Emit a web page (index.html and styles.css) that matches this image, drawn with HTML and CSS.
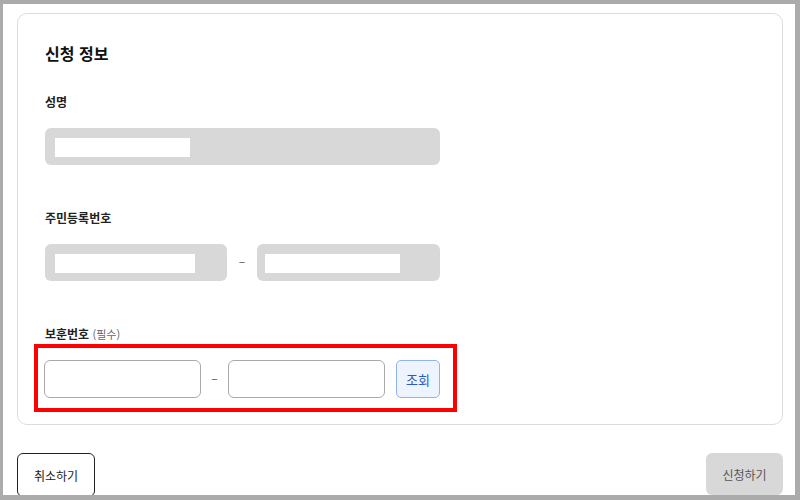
FILE: index.html
```html
<!DOCTYPE html>
<html lang="ko">
<head>
<meta charset="utf-8">
<link rel="stylesheet" href="styles.css">
</head>
<body>
<div class="frame">
  <section class="card">
    <h2 class="title">신청 정보</h2>

    <div class="label label-first">성명</div>
    <div class="field field-name"><span class="mask mask-name"></span></div>

    <div class="label">주민등록번호</div>
    <div class="pair">
      <div class="field"><span class="mask mask-jumin"></span></div>
      <span class="dash">–</span>
      <div class="field field-right"><span class="mask mask-jumin2"></span></div>
    </div>

    <div class="label">보훈번호 <span class="req">(필수)</span></div>
    <div class="bohun">
      <input class="input" type="text">
      <span class="dash">–</span>
      <input class="input" type="text">
      <button class="lookup" type="button">조회</button>
      <div class="highlight"></div>
    </div>
  </section>

  <div class="actions">
    <button class="btn btn-cancel" type="button">취소하기</button>
    <button class="btn btn-submit" type="button">신청하기</button>
  </div>
</div>
</body>
</html>
```

FILE: styles.css
```css
* { box-sizing: border-box; }

html, body {
  margin: 0;
  padding: 0;
  background: #ababab;
  height: 500px;
  overflow: hidden;
}

body {
  font-family: "Noto Sans CJK KR", "Noto Sans", sans-serif;
  color: #111;
}

.frame {
  margin: 4px 5px 0 3px;
  height: 491px;
  background: #fff;
  padding: 9px 12px 0 14px;
  overflow: hidden;
}

.card {
  border: 1px solid #dcdcdc;
  border-radius: 10px;
  padding: 26px 27px 26px 27px;
  height: 412px;
}

.title {
  margin: 1px 0 0 0;
  font-size: 16px;
  line-height: 24px;
  font-weight: 700;
  color: #111;
}

.label {
  font-size: 12px;
  font-weight: 700;
  line-height: 20px;
  margin-top: 43px;
  margin-bottom: 16px;
  color: #222;
}

.label-first {
  margin-top: 27px;
}

.req {
  font-weight: 400;
  font-size: 11px;
  color: #666;
}

.field {
  height: 37px;
  background: #d8d8d8;
  border-radius: 6px;
  padding: 10px 10px;
  display: flex;
  align-items: flex-start;
}

.field-right {
  padding-left: 8px;
}

.field-name {
  width: 395px;
}

.mask {
  display: block;
  background: #fff;
  height: 19px;
}

.mask-name { width: 135px; }
.mask-jumin { width: 140px; }
.mask-jumin2 { width: 135px; }

.pair {
  width: 395px;
  display: grid;
  grid-template-columns: 182px 30px 183px;
  align-items: center;
}

.dash {
  text-align: center;
  color: #555;
  font-size: 12px;
  line-height: 12px;
  padding-bottom: 3px;
}

.bohun {
  position: relative;
  width: 396px;
  margin-left: -1px;
  display: grid;
  grid-template-columns: 157px 27px 157px 55px;
  align-items: center;
}

.input {
  height: 38px;
  width: 157px;
  border: 1px solid #aaa;
  border-radius: 6px;
  background: #fff;
  margin: 0;
  padding: 0 10px;
  font: inherit;
}

.lookup {
  margin-left: 11px;
  width: 44px;
  height: 38px;
  border: 1px solid #8fb4ee;
  border-radius: 5px;
  background: #eef4fe;
  color: #2a5cc4;
  font-family: inherit;
  font-size: 13px;
  padding: 0;
}

.highlight {
  position: absolute;
  left: -10px;
  top: -16px;
  right: -17px;
  bottom: -14px;
  border: 4px solid #ff0000;
  pointer-events: none;
}

.actions {
  display: flex;
  justify-content: space-between;
  margin-top: 28px;
}

.btn {
  font-family: inherit;
  font-size: 12px;
  border-radius: 6px;
  padding: 0;
}

.btn-cancel {
  width: 78px;
  height: 44px;
  background: #fff;
  border: 1px solid #222;
  color: #222;
}

.btn-submit {
  width: 77px;
  height: 42px;
  background: #d8d8d8;
  border: none;
  color: #555;
}
```
